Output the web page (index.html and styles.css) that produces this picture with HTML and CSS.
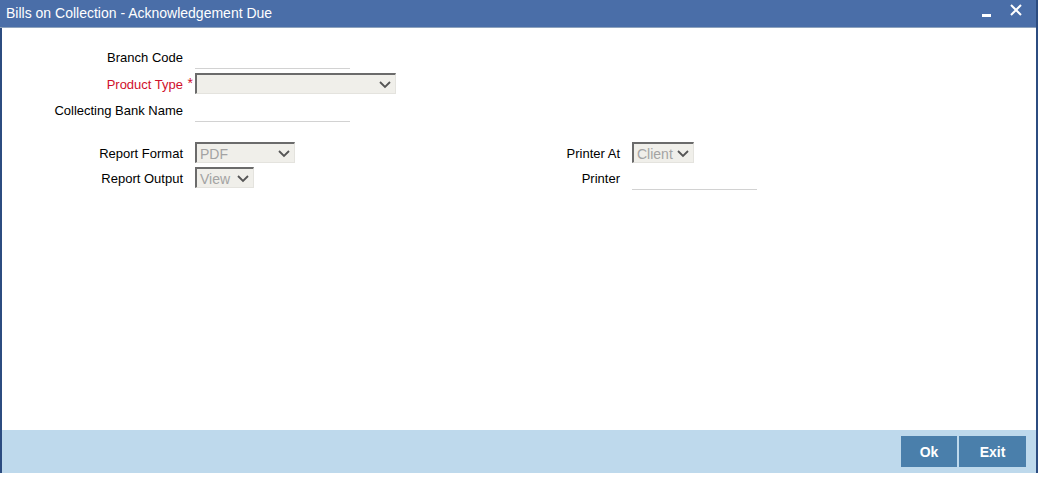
FILE: index.html
```html
<!DOCTYPE html>
<html lang="en">
<head>
<meta charset="UTF-8">
<title>Bills on Collection - Acknowledgement Due</title>
<link rel="stylesheet" href="styles.css">
</head>
<body>

<div class="window">
  <div class="titlebar">
    <span class="title">Bills on Collection - Acknowledgement Due</span>
    <div class="win-btns">
      <span class="win-min"></span>
      <svg class="win-close" width="12" height="12" viewBox="0 0 12 12"><path d="M1 1 L11 11 M11 1 L1 11" stroke="#fff" stroke-width="2"/></svg>
    </div>
  </div>

  <div class="content">
    <!-- top fields -->
    <div class="fields">
      <div class="row row-a">
        <label class="lbl">Branch Code</label>
        <div class="txt w155"></div>
      </div>
      <div class="row row-b">
        <label class="lbl req">Product Type</label>
        <div class="sel w201"><span class="sel-val"></span><svg class="chev" width="12" height="8" viewBox="0 0 12 8"><path d="M1 1 L6 6 L11 1" fill="none" stroke="#555" stroke-width="1.8"/></svg></div>
      </div>
      <div class="row row-c">
        <label class="lbl">Collecting Bank Name</label>
        <div class="txt w155"></div>
      </div>
    </div>

    <!-- report options -->
    <div class="report">
      <div class="col-left">
        <div class="row row-r">
          <label class="lbl">Report Format</label>
          <div class="sel w100"><span class="sel-val">PDF</span><svg class="chev" width="12" height="8" viewBox="0 0 12 8"><path d="M1 1 L6 6 L11 1" fill="none" stroke="#555" stroke-width="1.8"/></svg></div>
        </div>
        <div class="row row-r">
          <label class="lbl">Report Output</label>
          <div class="sel w59"><span class="sel-val">View</span><svg class="chev" width="12" height="8" viewBox="0 0 12 8"><path d="M1 1 L6 6 L11 1" fill="none" stroke="#555" stroke-width="1.8"/></svg></div>
        </div>
      </div>
      <div class="col-right">
        <div class="row row-r">
          <label class="lbl">Printer At</label>
          <div class="sel w62"><span class="sel-val">Client</span><svg class="chev" width="12" height="8" viewBox="0 0 12 8"><path d="M1 1 L6 6 L11 1" fill="none" stroke="#555" stroke-width="1.8"/></svg></div>
        </div>
        <div class="row row-r">
          <label class="lbl">Printer</label>
          <div class="txt w125"></div>
        </div>
      </div>
    </div>
  </div>

  <div class="footer">
    <button class="btn btn-ok">Ok</button>
    <button class="btn btn-exit">Exit</button>
  </div>
</div>

</body>
</html>
```

FILE: styles.css
```css
:root {
  --title-bg: #4a6ea8;
  --frame: #2c4c80;
  --footer-bg: #bed9ec;
  --btn-bg: #4a7fab;
  --label: #000;
  --required: #d0102c;
}

body {
  margin: 0;
  padding: 0;
  background: #fff;
  font-family: Arial, "Liberation Sans", sans-serif;
  font-size: 13px;
  color: var(--label);
}

.window {
  width: 1038px;
  height: 473px;
  box-sizing: border-box;
  border-left: 2px solid var(--frame);
  border-right: 2px solid var(--frame);
  display: flex;
  flex-direction: column;
}

.titlebar {
  height: 27px;
  background: var(--title-bg);
  border-bottom: 1px solid #8ea3bd;
  display: flex;
  align-items: center;
  justify-content: space-between;
  padding: 0 14px 0 4px;
  margin-left: -2px;
}

.title {
  color: #fff;
  font-size: 14px;
  padding-left: 2px;
  margin-top: -1px;
}

.win-btns {
  display: flex;
  align-items: center;
  gap: 19px;
  margin-top: -8px;
}

.win-min {
  width: 9px;
  height: 3px;
  background: #fff;
  margin-top: 11px;
}

.content {
  flex: 1;
  background: #fff;
}

.row {
  display: flex;
  align-items: center;
}

.lbl {
  width: 181px;
  margin-right: 12px;
  text-align: right;
  position: relative;
  white-space: nowrap;
}

.lbl.req {
  color: var(--required);
}

.lbl.req::after {
  content: "*";
  position: absolute;
  right: -10px;
  top: -2px;
  color: var(--required);
  font-size: 14px;
}

.fields {
  padding-top: 17px;
}

.row-a { height: 25px; }
.row-b { height: 28px; padding-top: 1px; box-sizing: border-box; }
.row-c { height: 24px; }

.txt {
  height: 21px;
  border-bottom: 1px solid #d2d2d2;
  margin-top: 1px;
}

.w155 { width: 155px; }
.w125 { width: 125px; }

.sel {
  height: 21px;
  box-sizing: border-box;
  background: #f0efea;
  border-top: 2px solid #6b6b6b;
  border-left: 2px solid #6b6b6b;
  border-right: 1px solid #e4e3de;
  border-bottom: 1px solid #e4e3de;
  display: flex;
  align-items: center;
  justify-content: space-between;
  padding: 1px 4px 0 3px;
  color: #a3a3a3;
  font-size: 14px;
}

.row-b .sel { margin-top: -2px; }

.w201 { width: 201px; }
.w100 { width: 100px; }
.w59 { width: 59px; }
.w62 { width: 62px; }

.chev {
  flex-shrink: 0;
}

.report {
  display: flex;
  padding-top: 19px;
}

.report .sel { margin-top: -2px; }

.col-left {
  width: 430px;
}

.col-right .lbl {
  width: 188px;
}

.row-r { height: 25px; }

.footer {
  height: 43px;
  background: var(--footer-bg);
  display: flex;
  align-items: center;
  justify-content: flex-end;
  gap: 2px;
  padding-right: 10px;
}

.btn {
  height: 31px;
  border: none;
  background: var(--btn-bg);
  color: #fff;
  font-family: Arial, "Liberation Sans", sans-serif;
  font-weight: bold;
  font-size: 14px;
  padding: 0;
}

.btn-ok { width: 56px; }
.btn-exit { width: 67px; }
```
